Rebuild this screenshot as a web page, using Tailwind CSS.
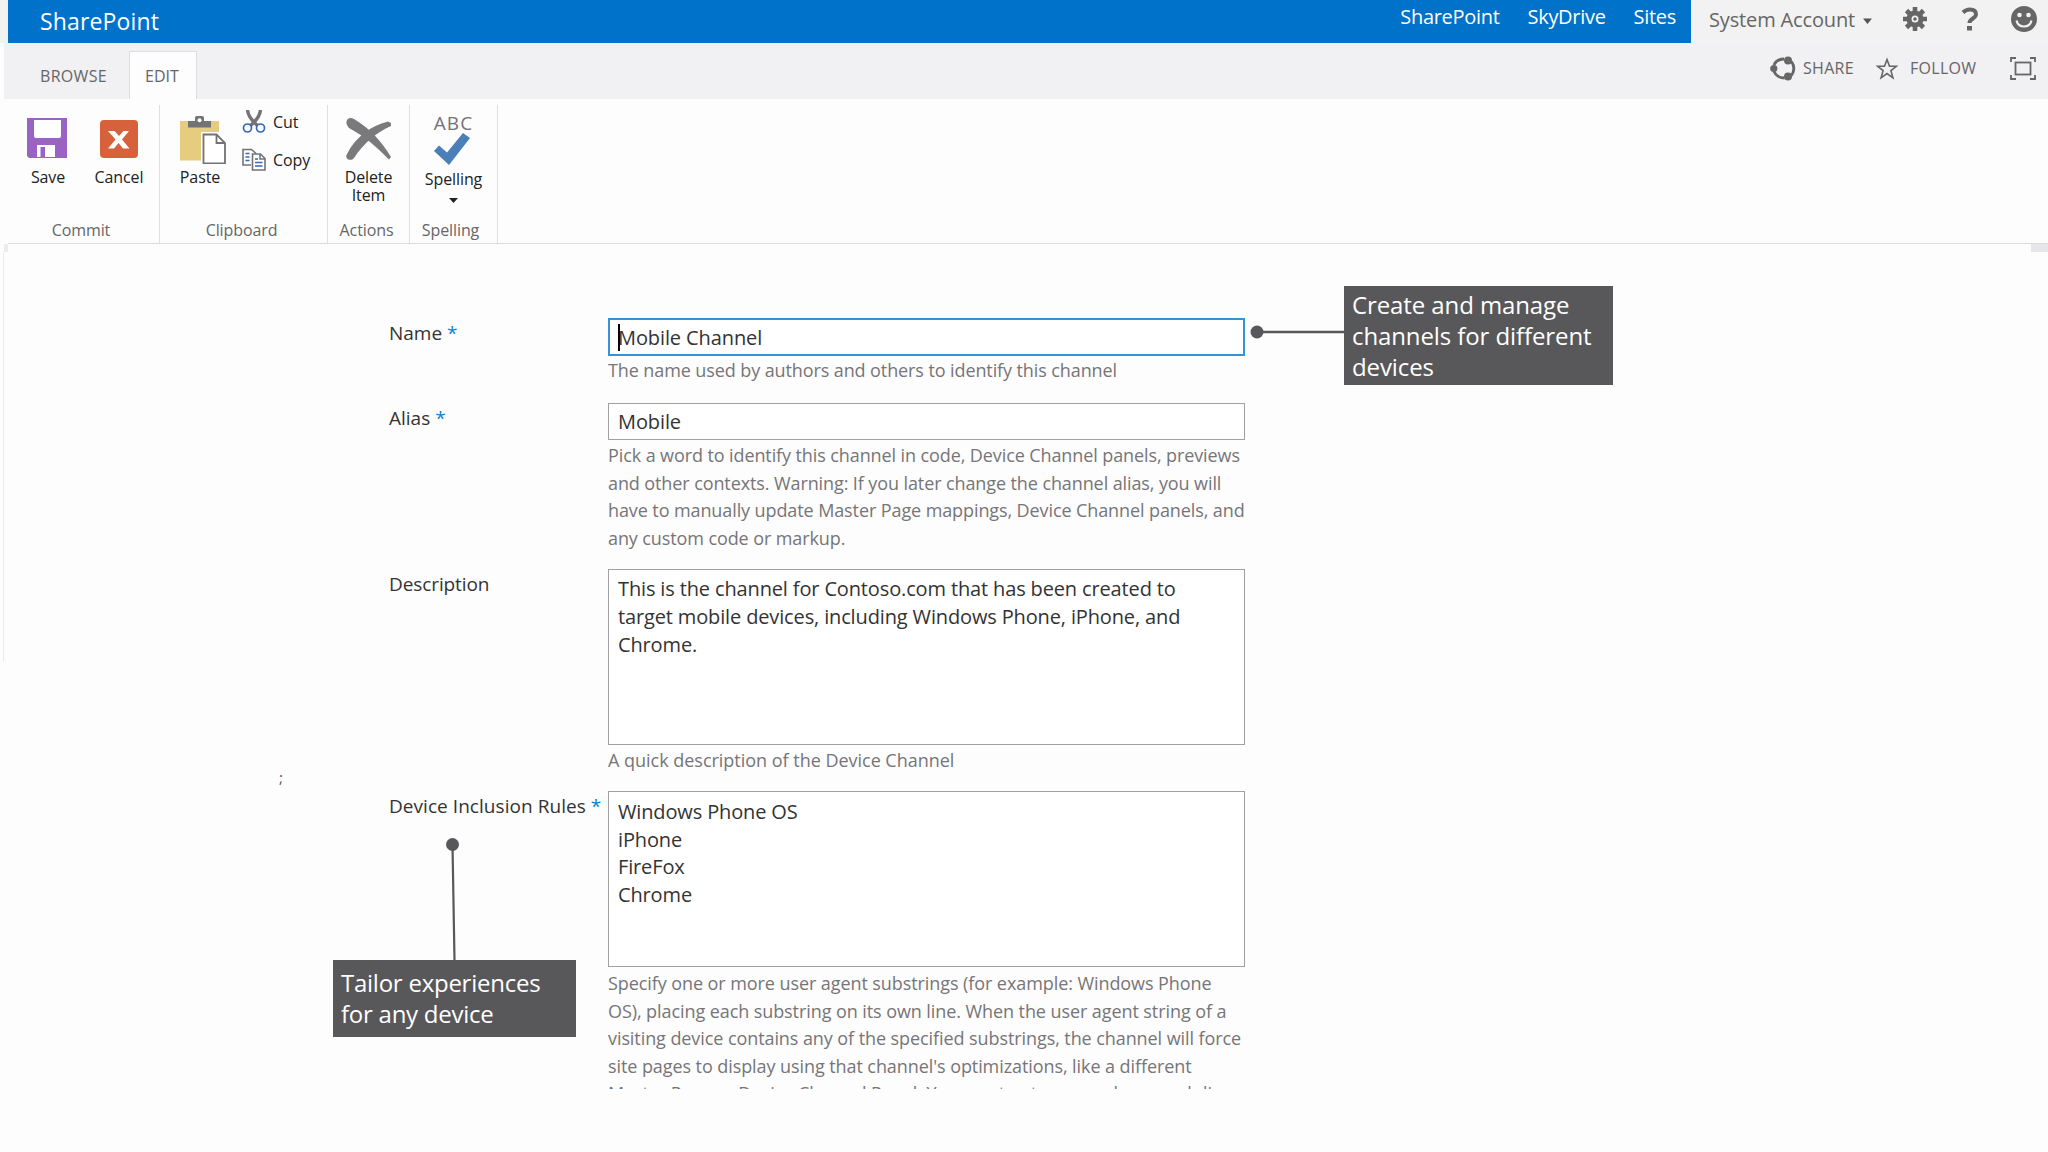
<!DOCTYPE html>
<html lang="en">
<head>
  <meta charset="UTF-8" />
  <meta name="viewport" content="width=device-width, initial-scale=1.0"/>
  <title>Device Channels - Edit Item</title>
  <script src="https://cdn.jsdelivr.net/npm/@tailwindcss/browser@4"></script>
</head>
<body class="relative w-[2048px] h-[1152px] overflow-hidden bg-[#fdfdfd] font-['Open_Sans','Noto_Sans',sans-serif] text-[#333]">

  <!-- Suite bar -->
  <header class="flex h-[43px] pl-2 bg-[#f1f2f1]">
    <div class="flex justify-between w-[1683px] bg-[#0072c9] text-white">
      <span class="pl-[32px] pt-[5px] text-[23px] leading-[32px] tracking-[0.15px]">SharePoint</span>
      <nav class="flex gap-[28px] pr-[15px] pt-[2px] text-[20px] leading-[29px] tracking-[-0.3px]">
        <a>SharePoint</a>
        <a>SkyDrive</a>
        <a>Sites</a>
      </nav>
    </div>
    <div class="flex items-start pl-[18px] text-[#666]">
      <span class="w-[154px] pt-[5px] text-[20px] leading-[29px] tracking-[-0.15px] whitespace-nowrap">System Account</span>
      <svg class="w-[9px] h-[6px] mt-[18px]" viewBox="0 0 9 6"><path d="M0 0.5h9L4.5 6z" fill="#555"/></svg>
      <svg class="w-[26px] h-[26px] ml-[30px] mt-[6px]" viewBox="0 0 26 26" fill="none" stroke="#666">
        <circle cx="13" cy="13" r="6" stroke-width="5"/>
        <path d="M13 1v5M13 20v5M1 13h5M20 13h5M4.500 4.500l3.500 3.500M18 18l3.500 3.500M21.500 4.500L18 8M8 18l-3.500 3.500" stroke-width="4.600"/>
        <circle cx="13" cy="13" r="1.800" fill="#666" stroke="none"/>
      </svg>
      <svg class="w-[18px] h-[24px] ml-[33px] mt-[7px]" viewBox="0 0 18 24" fill="none" stroke="#666" stroke-width="4">
        <path d="M2 5.500C4 3.500 6 2.500 9 2.500c4 0 6 2 6 4.800 0 4.200-6.500 4.200-6.500 8.700"/>
        <path d="M8.500 19v4.500" stroke-width="5"/>
      </svg>
      <svg class="w-[26px] h-[27px] ml-[32px] mt-[6px]" viewBox="0 0 26 27">
        <ellipse cx="13" cy="13" rx="13" ry="13" fill="#666"/>
        <circle cx="8.500" cy="9" r="2.300" fill="#f1f2f1"/>
        <circle cx="17.500" cy="9" r="2.300" fill="#f1f2f1"/>
        <path d="M5.500 14.500c1 4.200 4 6 7.500 6s6.500-1.800 7.500-6" fill="none" stroke="#f1f2f1" stroke-width="2.200"/>
      </svg>
    </div>
  </header>

  <!-- Ribbon tabs -->
  <div class="flex justify-between h-[56px] ml-1 bg-[#f1f0f3] text-[16px] text-[#666] leading-[22px]">
    <div class="flex pt-[8px]">
      <span class="w-[125px] pl-[36px] pt-[14px] tracking-[0.3px]">BROWSE</span>
      <span class="w-[68px] pl-[15px] pt-[13px] bg-[#fdfdfd] border border-b-0 border-[#dedde1]">EDIT</span>
    </div>
    <div class="flex pt-[13px] pr-[12px]">
      <svg class="w-[26px] h-[25px]" viewBox="0 0 26 25" fill="none" stroke="#666" stroke-width="2.800">
        <path d="M4 9C5.500 5.500 9 3 14 3M21.500 5.500c3 4.500 3 9.500 0 14M14.500 22C9.500 22 5.500 19 4 15.500"/>
        <circle cx="3.800" cy="12.500" r="3.600" fill="#666" stroke="none"/>
        <circle cx="18" cy="4.500" r="4" fill="#666" stroke="none"/>
        <circle cx="18" cy="20.500" r="4" fill="#666" stroke="none"/>
      </svg>
      <span class="w-[80px] pl-[7px] pt-px tracking-[0.3px]">SHARE</span>
      <svg class="w-[22px] h-[24px]" viewBox="0 0 22 24" fill="none" stroke="#666" stroke-width="1.600">
        <path d="M11 3.500l2.500 6.800h6.800l-5.400 4.300 2 7.200L11 17.500l-5.900 4.300 2-7.200-5.400-4.300h6.800z"/>
      </svg>
      <span class="w-[112px] pl-[12px] pt-px tracking-[0.3px]">FOLLOW</span>
      <svg class="w-[26px] h-[24px]" viewBox="0 0 26 24" fill="none" stroke="#666" stroke-width="1.800">
        <path d="M1 6V2h5M20 2h5v4M25 19v4h-5M6 23H1v-4"/>
        <rect x="5.500" y="6.500" width="15" height="12"/>
      </svg>
    </div>
  </div>

  <!-- Ribbon -->
  <div class="flex h-[145px] ml-2 pt-[6px] border-b border-[#dcdadf] text-[16px] leading-[18px] text-[#222] tracking-[-0.1px]">
    <section class="flex flex-col justify-between w-[152px] border-r border-[#dfdee2]">
      <div class="flex gap-[23px] pl-4 pt-[11px]">
        <div class="flex flex-col items-center w-[48px]">
          <svg class="w-[48px] h-[48px] mb-1" viewBox="0 0 48 48">
            <path d="M3 2h40v40H5l-2-2z" fill="#9a62c4"/>
            <path d="M10 4h27v16q0 2-2 2H12q-2 0-2-2z" fill="#fff"/>
            <path d="M13 29h18v12H13z" fill="#fff"/>
            <path d="M16.500 31h4.500v10h-4.500z" fill="#9a62c4"/>
          </svg>
          <span>Save</span>
        </div>
        <div class="flex flex-col items-center w-[48px]">
          <svg class="w-[48px] h-[48px] mb-1" viewBox="0 0 48 48">
            <rect x="5" y="4" width="38" height="38" rx="4" fill="#d7613a"/>
            <path d="M13 15h6.500l4.500 5 4.500-5H34l-7 8.500 7.500 9h-6.500l-4.500-5.500-4.500 5.500H13l7.500-9z" fill="#fff"/>
          </svg>
          <span>Cancel</span>
        </div>
      </div>
      <span class="pb-1 pr-[5px] text-center text-[#666]">Commit</span>
    </section>

    <section class="flex flex-col justify-between w-[168px] border-r border-[#dfdee2]">
      <div class="flex gap-[18px] pl-4">
        <div class="flex flex-col items-center w-[48px] pt-[11px]">
          <svg class="w-[52px] h-[48px] mb-1 ml-[2px] shrink-0" viewBox="0 0 52 48">
            <path d="M5 5h39v39.500H5z" fill="#e5cc7f"/>
            <path d="M11 2h26v10H11z" fill="#fdfdfd"/>
            <path d="M5 5h8v8H5zM36 5h8v8h-8zM11 11h27v2H11z" fill="#e5cc7f"/>
            <path d="M13 5h7V1.500Q20 0 22 0h5q2 0 2 1.500V5h7v6.500H13z" fill="#737275"/>
            <circle cx="24.500" cy="4.300" r="2" fill="#fdfdfd"/>
            <path d="M26 16h19v4h7v28H26z" fill="#fdfdfd"/>
            <path d="M28.500 18.500h13L50 27v20.500H28.500z" fill="#fff" stroke="#737275" stroke-width="1.800"/>
            <path d="M41.500 18.500V27H50" fill="none" stroke="#737275" stroke-width="1.800"/>
          </svg>
          <span>Paste</span>
        </div>
        <div class="flex flex-col gap-[14px] pt-[5px]">
          <div class="flex items-center gap-[7px] h-[24px]">
            <svg class="w-[24px] h-[24px]" viewBox="0 0 24 24" fill="none">
              <path d="M5.500 0C6 5 9 10 15.500 15.500M18.500 0C18 5 15 10 8.500 15.500" stroke="#737275" stroke-width="3.400"/>
              <circle cx="5.500" cy="18" r="4" stroke="#3766b4" stroke-width="1.700"/>
              <circle cx="18.500" cy="18" r="4" stroke="#3766b4" stroke-width="1.700"/>
            </svg>
            <span>Cut</span>
          </div>
          <div class="flex items-center gap-[7px] h-[24px]">
            <svg class="w-[24px] h-[24px]" viewBox="0 0 24 24" fill="none" stroke-width="1.600">
              <path d="M9 17H1V1.500h8.500L14 5.500" stroke="#737275"/>
              <path d="M3.500 5.500h4M3.500 9h4M3.500 12.500h4" stroke="#3766b4"/>
              <path d="M10.500 6h8l4.500 4.500V22H10.500z" fill="#fff" stroke="#737275"/>
              <path d="M18 6v5h5" stroke="#737275"/>
              <path d="M13 11h3M13 14.500h7.500M13 18h7.500" stroke="#3766b4"/>
            </svg>
            <span>Copy</span>
          </div>
        </div>
      </div>
      <span class="pb-1 pr-[4px] text-center text-[#666]">Clipboard</span>
    </section>

    <section class="flex flex-col justify-between w-[82px] border-r border-[#dfdee2]">
      <div class="flex flex-col items-center pt-[11px]">
        <svg class="w-[48px] h-[48px] mb-1 mr-[2px]" viewBox="0 0 48 48" fill="#7a797b">
          <path d="M3 9C1 4 5 0 10 3c15 9 26 20 37 38l-2 2.500C33 31 20 20 5 12z"/>
          <path d="M47 7v3C33 16 20 27 10 42c-3 4-10 1-7-4C12 20 29 9 44 5.500z"/>
        </svg>
        <span class="text-center">Delete<br>Item</span>
      </div>
      <span class="pb-1 pr-[4px] text-center text-[#666]">Actions</span>
    </section>

    <section class="flex flex-col justify-between w-[88px] border-r border-[#dfdee2]">
      <div class="flex flex-col items-center pt-[8px]">
        <span class="text-[19px] leading-[20px] tracking-[1px] font-medium text-[#737275]">ABC</span>
        <svg class="w-[36px] h-[32px] mr-[3px]" viewBox="0 0 36 32"><path d="M0 18l5-5.500 8 7L29 0l7 5-21 27z" fill="#4a7fb8"/></svg>
        <span class="mt-[5px]">Spelling</span>
        <svg class="w-[9px] h-[5px] mt-[10px]" viewBox="0 0 9 5"><path d="M0 0h9L4.500 5z" fill="#222"/></svg>
      </div>
      <span class="pb-1 pr-[6px] text-center text-[#666]">Spelling</span>
    </section>
  </div>

  <!-- Edges of the page body -->
  <div class="flex justify-between h-[8px] pl-1">
    <span class="w-1 bg-[#ececef]"></span>
    <span class="w-[17px] bg-[#e7e6ea]"></span>
  </div>
  <div class="absolute left-[3px] top-[252px] w-px h-[409px] bg-[#ebebed]"></div>
  <span class="absolute left-[279px] top-[767px] text-[15px] leading-[20px] text-[#555]">;</span>

  <!-- Item form -->
  <form class="grid grid-cols-[219px_637px] grid-rows-[85px_166px_222px_298px] ml-[389px] mt-[66px] text-[18px] leading-[27.6px] tracking-[-0.1px] text-[#767578]">
    <label class="pt-[2px] text-[19px] text-[#333] tracking-normal">Name <span class="text-[#0f7fd0]">*</span></label>
    <div>
      <div class="flex items-center h-[38px] mb-[1px] px-[8px] pt-px border-2 border-[#3a93d0] bg-white text-[20px] text-[#333]">
        <span class="w-[2px] h-[27px] mr-[-2px] bg-black"></span>Mobile Channel
      </div>
      <p>The name used by authors and others to identify this channel</p>
    </div>

    <label class="pt-[2px] text-[19px] text-[#333] tracking-normal">Alias <span class="text-[#0f7fd0]">*</span></label>
    <div>
      <div class="flex items-center h-[37px] mb-[2px] px-[9px] pt-px border border-[#a09fa2] bg-white text-[20px] text-[#333]">Mobile</div>
      <p class="whitespace-nowrap">Pick a word to identify this channel in code, Device Channel panels, previews<br>and other contexts. Warning: If you later change the channel alias, you will<br>have to manually update Master Page mappings, Device Channel panels, and<br>any custom code or markup.</p>
    </div>

    <label class="pt-[2px] text-[19px] text-[#333]">Description</label>
    <div>
      <div class="h-[176px] mb-[2px] px-[9px] pt-[5px] border border-[#a09fa2] bg-white text-[20px] text-[#333] leading-[27.8px] tracking-[-0.14px] whitespace-nowrap">This is the channel for Contoso.com that has been created to<br>target mobile devices, including Windows Phone, iPhone, and<br>Chrome.</div>
      <p class="tracking-[-0.02px]">A quick description of the Device Channel</p>
    </div>

    <label class="pt-[2px] text-[19px] text-[#333] tracking-[0.05px] whitespace-nowrap">Device Inclusion Rules <span class="text-[#0f7fd0]">*</span></label>
    <div class="overflow-hidden">
      <div class="h-[176px] mb-[3px] px-[9px] pt-[6px] border border-[#a09fa2] bg-white text-[20px] text-[#333] leading-[27.6px] tracking-[-0.14px]">Windows Phone OS<br>iPhone<br>FireFox<br>Chrome</div>
      <p class="tracking-[-0.08px] leading-[27.5px] whitespace-nowrap">Specify one or more user agent substrings (for example: Windows Phone<br>OS), placing each substring on its own line. When the user agent string of a<br>visiting device contains any of the specified substrings, the channel will force<br>site pages to display using that channel's optimizations, like a different<br>Master Page or Device Channel Panel. You must enter one rule on each line</p>
    </div>
  </form>

  <!-- Callouts -->
  <svg class="absolute left-[1250px] top-[324px] w-[96px] h-[16px]" viewBox="0 0 96 16">
    <circle cx="7" cy="8" r="6.500" fill="#58585a"/>
    <path d="M7 8h88" stroke="#58585a" stroke-width="2.500"/>
  </svg>
  <div class="absolute left-[1344px] top-[286px] w-[269px] h-[99px] pl-[8px] pt-[4px] bg-[#58585a] text-white text-[24px] leading-[30.8px] tracking-[-0.1px] whitespace-nowrap">Create and manage<br>channels for different<br>devices</div>

  <svg class="absolute left-[445px] top-[837px] w-[16px] h-[124px]" viewBox="0 0 16 124">
    <circle cx="7.500" cy="7.500" r="6.500" fill="#58585a"/>
    <path d="M7.500 7.500l2 116" stroke="#58585a" stroke-width="2.200"/>
  </svg>
  <div class="absolute left-[333px] top-[960px] w-[243px] h-[77px] pl-[8px] pt-[8px] bg-[#58585a] text-white text-[24px] leading-[30.8px] tracking-[-0.25px] whitespace-nowrap">Tailor experiences<br>for any device</div>
</body>
</html>
